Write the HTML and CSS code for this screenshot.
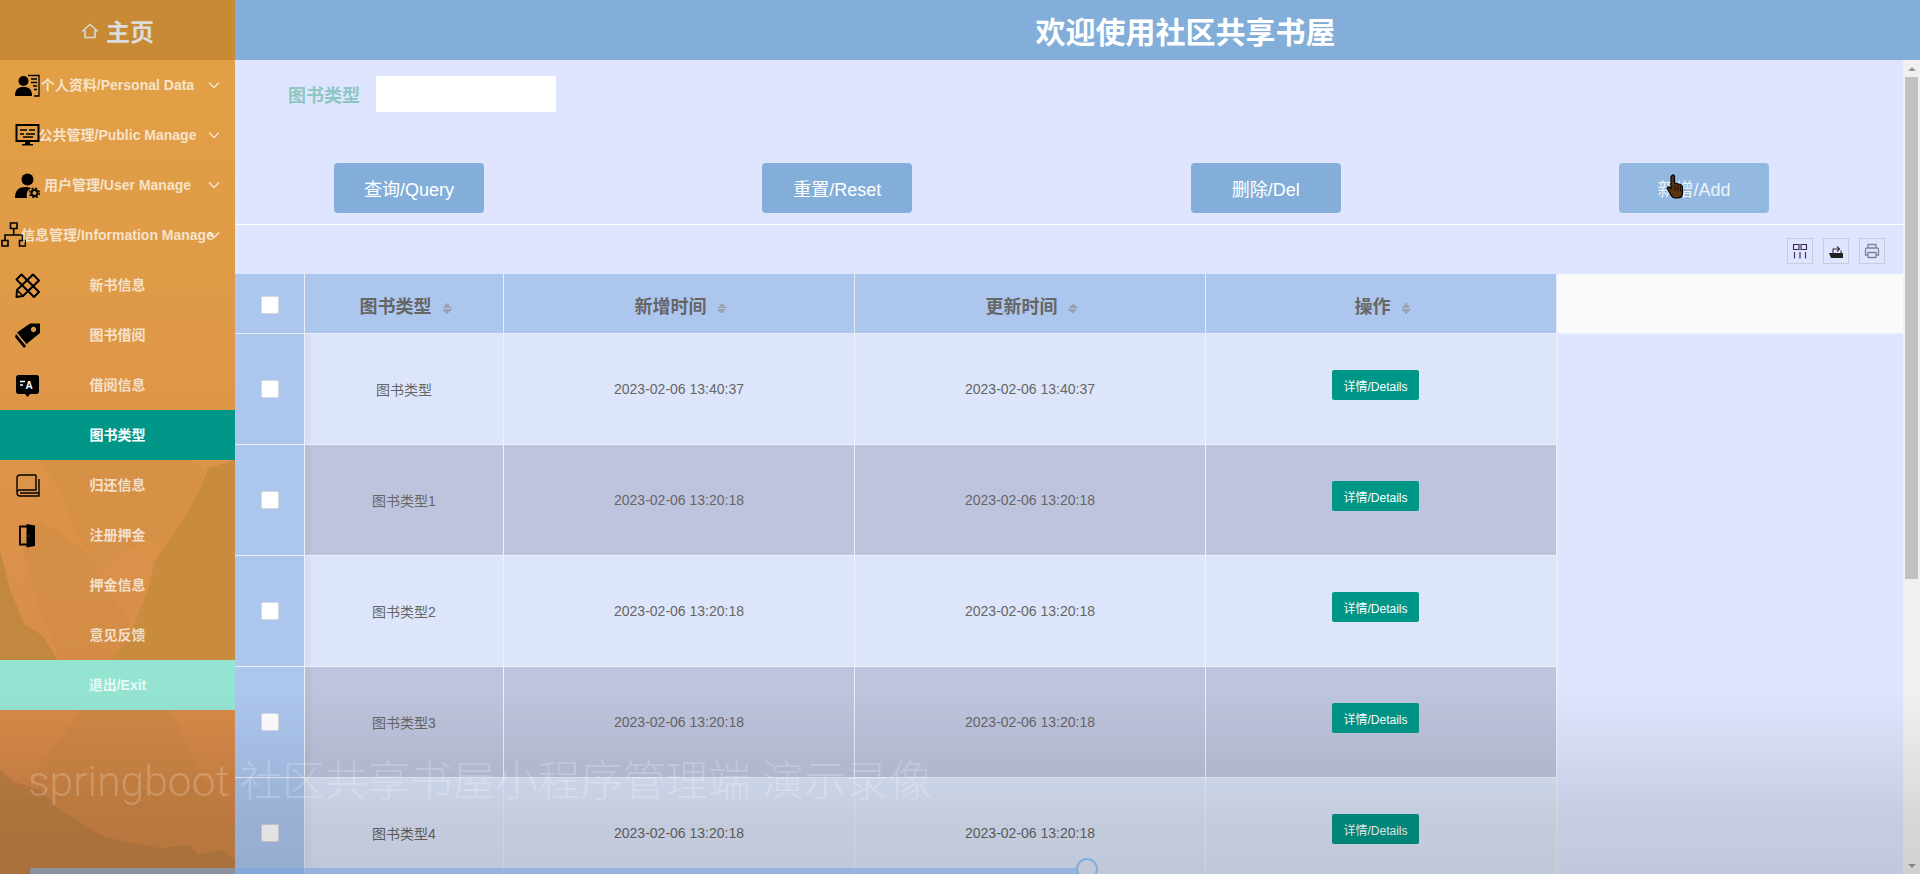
FILE: index.html
```html
<!DOCTYPE html>
<html lang="zh-CN">
<head>
<meta charset="utf-8">
<title>社区共享书屋</title>
<link rel="stylesheet" href="styles.css">
</head>
<body>
<div class="app">
  <aside class="side">
    <svg class="side-bg" viewBox="0 0 235 874" preserveAspectRatio="none" aria-hidden="true">
      <path fill="#d29046" opacity=".6" d="M40 460 60 490 75 530 95 560 100 575 125 550 150 540 170 555 190 530 205 470 190 460Z"/>
      <path fill="#c98c3e" d="M235 460 208 468 200 490 180 525 155 560 148 590 128 640 110 660 235 660Z"/>
      <path fill="#d08c42" opacity=".5" d="M95 560 100 582 130 620 120 660 60 660 40 610 20 540 40 520 70 540Z"/>
      <path fill="#c2883f" d="M0 550 10 590 25 625 42 635 58 660 0 660Z"/>
      <path fill="#d08746" d="M30 800 40 765 75 720 80 710 170 710 190 750 205 785 235 815 235 860 0 860 0 790Z"/>
      <path fill="#c08044" d="M0 770 15 782 40 790 60 810 85 825 100 835 125 842 160 848 190 845 198 855 220 850 235 860 235 874 0 874Z"/>
    </svg>
    <div class="brand">
      <svg class="brand-icon" viewBox="0 0 18 16" aria-hidden="true"><path d="M1 8.500 9 1.500 17 8.500M4 7v7.500h10V7" fill="none" stroke="#d8d8d8" stroke-width="1.600"/></svg>
      <span>主页</span>
    </div>
    <nav class="menu">
      <a class="item">
        <svg class="ico" viewBox="0 0 25 25" aria-hidden="true"><circle cx="8.500" cy="8" r="5"/><path d="M0 23c0-7 3-9 8.500-9s8.500 2 8.500 9z"/><path d="M13 2.500h11v20.500h-5M16 6h6M16 9.500h6M18 13h4M19 16.500h3" fill="none" stroke="#000" stroke-width="1.300"/></svg>
        个人资料/Personal Data
        <svg class="chev" viewBox="0 0 12 8" aria-hidden="true"><path d="M1 1.500 6 6.500 11 1.500"/></svg>
      </a>
      <a class="item">
        <svg class="ico" viewBox="0 0 25 25" aria-hidden="true"><rect x="1.500" y="2" width="22" height="16" fill="none" stroke="#000" stroke-width="2"/><path d="M5 7h7M14 7h6M5 11h4M11 11h9M8 14h10" stroke="#000" stroke-width="1.500"/><path d="M10 18h5v3h3v1.500H7V21h3z"/></svg>
        公共管理/Public Manage
        <svg class="chev" viewBox="0 0 12 8" aria-hidden="true"><path d="M1 1.500 6 6.500 11 1.500"/></svg>
      </a>
      <a class="item">
        <svg class="ico" viewBox="0 0 25 25" aria-hidden="true"><circle cx="12.500" cy="6.500" r="6"/><path d="M0 25c0-8 4-11 11-11 2 0 4 .5 5 1.500-3 1-5 4-4 9.500z"/><circle cx="19.500" cy="20" r="3" fill="none" stroke="#000" stroke-width="2"/><circle cx="19.500" cy="20" r="4.800" fill="none" stroke="#000" stroke-width="1.500" stroke-dasharray="2 1.800"/></svg>
        用户管理/User Manage
        <svg class="chev" viewBox="0 0 12 8" aria-hidden="true"><path d="M1 1.500 6 6.500 11 1.500"/></svg>
      </a>
      <a class="item">
        <svg class="ico ico-left" viewBox="0 0 25 25" aria-hidden="true"><path d="M9.500 1h6.500v5.500H9.500zM1 18.500h6V24H1zM18.500 18.500h6V24h-6zM12.700 6.500V13M4 18.500V13h17.500v5.500" fill="none" stroke="#000" stroke-width="1.600"/></svg>
        信息管理/Information Manage
        <svg class="chev" viewBox="0 0 12 8" aria-hidden="true"><path d="M1 1.500 6 6.500 11 1.500"/></svg>
      </a>
      <a class="item">
        <svg class="ico" viewBox="0 0 25 25" aria-hidden="true"><path d="M1.500 6.500 6.500 1.500 24 19 19 24Z" fill="none" stroke="#000" stroke-width="2" stroke-linejoin="round"/><path d="M18 1.500 24 7.500 8 23 1.500 24 2 17Z" fill="none" stroke="#000" stroke-width="2" stroke-linejoin="round"/><path d="M2.500 17.500 7.500 22.500M14.500 16.500 17 14" stroke="#000" stroke-width="1.500"/></svg>
        新书信息
      </a>
      <a class="item">
        <svg class="ico" viewBox="0 0 25 25" aria-hidden="true"><path fill-rule="evenodd" d="M15 .500h10V10L11.500 21 2 9.500zM18.500 3.800a2.700 2.700 0 1 0 .01 0z"/><path d="M1 11 11 23 9 25 0 14z"/></svg>
        图书借阅
      </a>
      <a class="item">
        <svg class="ico" viewBox="0 0 25 25" aria-hidden="true"><path d="M3 2h19a2.500 2.500 0 0 1 2 2v15a2.500 2.500 0 0 1-2 2h-7l-2.500 3-2.500-3H3a2.500 2.500 0 0 1-2-2V4a2.500 2.500 0 0 1 2-2z"/><path d="M5 8.500h5M5 12h3" stroke="#fff" stroke-width="1.500"/><text class="ico-letter" x="10.500" y="16">A</text></svg>
        借阅信息
      </a>
      <a class="item active">图书类型</a>
      <a class="item">
        <svg class="ico" viewBox="0 0 25 25" aria-hidden="true"><path d="M21 2H5a3 3 0 0 0-3 3v15a3 3 0 0 0 3 3h19V6M2 20a3 3 0 0 1 3-3h16V2M5 20h19" fill="none" stroke="#000" stroke-width="1.400"/></svg>
        归还信息
      </a>
      <a class="item">
        <svg class="ico" viewBox="0 0 25 25" aria-hidden="true"><path d="M5 3.500h10v18H5z" fill="none" stroke="#000" stroke-width="1.800"/><path fill-rule="evenodd" d="M11.500 1 20 2.500v20.500L11.500 24.500zM14.500 12a1 1 0 1 0 .01 0z"/></svg>
        注册押金
      </a>
      <a class="item">押金信息</a>
      <a class="item">意见反馈</a>
      <a class="item exit">退出/Exit</a>
    </nav>
  </aside>
  <div class="content">
    <header class="topbar"><h1>欢迎使用社区共享书屋</h1></header>
    <div class="pane">
      <main class="main">
        <form class="search">
          <label class="search-label" for="type">图书类型</label>
          <input class="search-input" id="type" type="text">
        </form>
        <div class="actions">
          <button class="btn" type="button">查询/Query</button>
          <button class="btn" type="button">重置/Reset</button>
          <button class="btn" type="button">删除/Del</button>
          <button class="btn btn-hover" type="button">新增/Add
            <svg class="hand" viewBox="0 0 18 25" aria-hidden="true"><path d="M6 1.500c1-1 2.500-.5 2.500 1V9l6 1.500c1.500.5 2 1.500 2 3V19c0 3-2 5-5 5H9c-2 0-3-1-4-3L1.500 15c-1-1.500.5-2.500 1.500-2l2 1.500V3z" fill="#5a3312" stroke="#000" stroke-width="1.200"/><path d="M9 11v6M12 11.500v6M14.500 12.500v5" stroke="#1e0f04" stroke-width="1"/></svg>
          </button>
        </div>
        <div class="tools">
          <button class="tool" type="button" aria-label="列"><svg viewBox="0 0 16 16"><path d="M1.500 1.500h5.500v5H1.500zM9 1.500h5.500v5H9zM2.500 9v6.500M8 9v6.500M13.500 9v6.500" fill="none" stroke="#3a2a55" stroke-width="1.100"/></svg></button>
          <button class="tool" type="button" aria-label="导出"><svg viewBox="0 0 16 16"><path d="M1 10h14v5H3z" fill="#222"/><path d="M5 10V6h6M9 3.500 11.500 6 9 8.500M13 7.500V10" fill="none" stroke="#333" stroke-width="1.100"/></svg></button>
          <button class="tool" type="button" aria-label="打印"><svg viewBox="0 0 16 16"><path d="M4 5V1.500h8V5M4 12H1.500V6.500A1.500 1.500 0 0 1 3 5h10a1.500 1.500 0 0 1 1.500 1.500V12H12M4 9.500h8v5H4z" fill="none" stroke="#7d8595" stroke-width="1.300"/></svg></button>
        </div>
        <table class="grid">
          <colgroup><col class="c-check"><col class="c-type"><col class="c-wide"><col class="c-wide"><col class="c-wide"><col></colgroup>
          <thead>
            <tr>
              <th class="check"><input class="box" type="checkbox" aria-label="全选"></th>
              <th>图书类型<i class="sort"></i></th>
              <th>新增时间<i class="sort"></i></th>
              <th>更新时间<i class="sort"></i></th>
              <th>操作<i class="sort"></i></th>
              <th class="filler"></th>
            </tr>
          </thead>
          <tbody>
            <tr><td class="check"><input class="box" type="checkbox" aria-label="选择"></td><td>图书类型</td><td>2023-02-06 13:40:37</td><td>2023-02-06 13:40:37</td><td class="op"><button class="detail" type="button">详情/Details</button></td><td class="filler"></td></tr>
            <tr><td class="check"><input class="box" type="checkbox" aria-label="选择"></td><td>图书类型1</td><td>2023-02-06 13:20:18</td><td>2023-02-06 13:20:18</td><td class="op"><button class="detail" type="button">详情/Details</button></td><td class="filler"></td></tr>
            <tr><td class="check"><input class="box" type="checkbox" aria-label="选择"></td><td>图书类型2</td><td>2023-02-06 13:20:18</td><td>2023-02-06 13:20:18</td><td class="op"><button class="detail" type="button">详情/Details</button></td><td class="filler"></td></tr>
            <tr><td class="check"><input class="box" type="checkbox" aria-label="选择"></td><td>图书类型3</td><td>2023-02-06 13:20:18</td><td>2023-02-06 13:20:18</td><td class="op"><button class="detail" type="button">详情/Details</button></td><td class="filler"></td></tr>
            <tr><td class="check"><input class="box" type="checkbox" aria-label="选择"></td><td>图书类型4</td><td>2023-02-06 13:20:18</td><td>2023-02-06 13:20:18</td><td class="op"><button class="detail" type="button">详情/Details</button></td><td class="filler"></td></tr>
          </tbody>
        </table>
      </main>
      <div class="scrollbar" aria-hidden="true">
        <div class="sb-arrow"></div>
        <div class="sb-track"><div class="sb-thumb"></div></div>
        <div class="sb-arrow sb-down"></div>
      </div>
    </div>
  </div>
</div>
<div class="player" aria-hidden="true">
  <div class="caption">springboot 社区共享书屋小程序管理端 演示录像</div>
  <div class="progress"></div>
  <div class="knob"></div>
</div>
</body>
</html>
```
FILE: styles.css
```css
* { box-sizing: border-box; }
html, body { margin: 0; height: 100%; overflow: hidden; }
body {
  font-family: "Liberation Sans", "Noto Sans CJK SC", sans-serif;
  font-size: 14px;
  color: #666;
  background: #dfe5fe;
}
.app { display: flex; height: 100vh; }

/* sidebar */
.side {
  position: relative;
  flex: 0 0 235px;
  background: linear-gradient(to bottom, #e3a144 0, #df9a47 300px, #da8f49 620px, #d38348 874px);
  overflow: hidden;
}
.side-bg { position: absolute; inset: 0; width: 100%; height: 100%; }
.brand {
  position: relative;
  height: 60px;
  display: flex;
  align-items: center;
  justify-content: center;
  gap: 7px;
  background: #c98a35;
  color: #dcdcdc;
  font-size: 24px;
  font-weight: 700;
}
.brand-icon { width: 18px; height: 16px; margin-top: 2px; }
.menu { position: relative; }
.item {
  position: relative;
  isolation: isolate;
  display: block;
  height: 50px;
  line-height: 50px;
  text-align: center;
  font-size: 14px;
  font-weight: 700;
  color: rgba(255, 255, 255, .72);
  white-space: nowrap;
}
.item.active { background: #009688; color: #fff; }
.item.exit { background: #95e4d2; color: rgba(255, 255, 255, .8); }
.ico { position: absolute; z-index: -1; left: 15px; top: 13px; width: 25px; height: 25px; }
.ico-left { left: 1px; top: 12px; }
.ico-letter { font: 700 10px "Liberation Sans", sans-serif; fill: #fff; }
.chev {
  position: absolute;
  left: 208px;
  top: 21px;
  width: 12px;
  height: 8px;
  fill: none;
  stroke: rgba(255, 255, 255, .75);
  stroke-width: 1.500;
}

/* right column */
.content { flex: 1; min-width: 0; display: flex; flex-direction: column; }
.topbar {
  flex: 0 0 60px;
  display: flex;
  align-items: center;
  justify-content: center;
  padding-left: 216px;
  background: #82aed9;
}
.topbar h1 { margin: 0; font-size: 30px; font-weight: 700; color: #fff; }
.pane { flex: 1; min-height: 0; display: flex; }
.main { flex: 1; min-width: 0; overflow: hidden; background: #dfe5fe; }

/* scrollbar */
.scrollbar { flex: 0 0 17px; display: flex; flex-direction: column; background: #f1f1f1; }
.sb-arrow {
  flex: 0 0 17px;
  display: flex;
  align-items: center;
  justify-content: center;
}
.sb-arrow::before {
  content: "";
  border-left: 4px solid transparent;
  border-right: 4px solid transparent;
  border-bottom: 4px solid #999;
}
.sb-down::before { border-bottom: 0; border-top: 4px solid #999; }
.sb-track { flex: 1; min-height: 0; padding: 0 2px; }
.sb-thumb { height: 502px; background: #c1c1c1; }

/* search */
.search { display: flex; align-items: center; gap: 16px; padding: 16px 0 0 53px; }
.search-label { font-size: 18px; font-weight: 700; color: #8ec6c4; }
.search-input { width: 180px; height: 36px; border: 0; background: #fff; padding: 0 10px; }
.actions {
  display: flex;
  justify-content: space-between;
  margin-top: 51px;
  padding: 0 134px 11px 99px;
  border-bottom: 1px solid #fff;
}
.btn {
  position: relative;
  width: 150px;
  height: 50px;
  border: 0;
  border-radius: 4px;
  background: #82aed9;
  color: #fff;
  font: inherit;
  font-size: 18px;
}
.btn-hover { background: #93b9e0; color: rgba(255, 255, 255, .85); }
.hand { position: absolute; left: 47px; top: 11px; width: 18px; height: 25px; }

/* toolbar */
.tools { height: 49px; display: flex; justify-content: flex-end; gap: 10px; padding: 13px 18px 0 0; }
.tool { width: 26px; height: 26px; padding: 4px; border: 1px solid #c8ccd8; background: transparent; }
.tool svg { display: block; width: 16px; height: 16px; }

/* table */
.grid { width: 100%; border-collapse: separate; border-spacing: 0; table-layout: fixed; }
.c-check { width: 70px; }
.c-type { width: 199px; }
.c-wide { width: 351px; }
.grid th {
  height: 60px;
  padding: 3px 0 0 3px;
  font-size: 18px;
  font-weight: 700;
  color: #666;
  background: #adc6ee;
  border-right: 1px solid #e6ecf9;
  border-bottom: 1px solid #e6ecf9;
  text-align: center;
}
.grid th.check { padding-left: 0; }
.grid td {
  height: 111px;
  padding: 0;
  text-align: center;
  color: #666;
  background: #dce5f9;
  border-right: 1px solid #eef1fb;
  border-bottom: 1px solid #eef1fb;
}
.grid tbody tr:nth-child(even) td { background: #bfc4de; }
.grid td:nth-child(2) { background-image: linear-gradient(to right, rgba(0, 0, 0, .04), transparent 10px); }
.grid tbody tr:nth-child(even) td:nth-child(2) { background-image: linear-gradient(to right, rgba(0, 0, 0, .04), transparent 10px); }
.grid td.op { padding-right: 11px; }
.grid td.check, .grid tbody tr:nth-child(even) td.check { background: #adc6ee; }
.grid th.filler { background: #fafafa; border-right: 0; border-bottom-color: #eef1fb; }
.grid td.filler, .grid tbody tr:nth-child(even) td.filler { background: transparent; border: 0; }
.box {
  appearance: none;
  display: block;
  width: 18px;
  height: 18px;
  margin: 0 auto;
  background: #fff;
  border: 1px solid #d5d9e3;
  border-radius: 2px;
}
.sort {
  display: inline-block;
  width: 10px;
  height: 11px;
  margin-left: 10px;
  vertical-align: -1px;
  background:
    linear-gradient(to bottom right, transparent 50%, #9aa3b5 50%) 0 0 / 5px 5px no-repeat,
    linear-gradient(to bottom left, transparent 50%, #9aa3b5 50%) 5px 0 / 5px 5px no-repeat,
    linear-gradient(to top right, transparent 50%, #9aa3b5 50%) 0 6px / 5px 5px no-repeat,
    linear-gradient(to top left, transparent 50%, #9aa3b5 50%) 5px 6px / 5px 5px no-repeat;
}
.detail {
  display: block;
  width: 87px;
  height: 30px;
  margin: 0 auto 8px;
  padding: 0;
  border: 0;
  border-radius: 2px;
  background: #009688;
  color: #fff;
  font: inherit;
  font-size: 12px;
}

/* video overlay */
.player {
  position: fixed;
  left: 0;
  right: 0;
  bottom: 0;
  height: 184px;
  overflow: hidden;
  pointer-events: none;
  background: linear-gradient(to bottom, rgba(0, 0, 0, 0) 0, rgba(0, 0, 0, .07) 48%, rgba(0, 0, 0, .1) 65%, rgba(0, 0, 0, .13) 100%);
}
.caption {
  position: absolute;
  left: 28px;
  top: 64px;
  font-family: "Roboto", "Noto Sans CJK SC", sans-serif;
  font-size: 42.600px;
  font-weight: 300;
  line-height: 54px;
  color: rgba(255, 255, 255, .2);
  white-space: nowrap;
}
.progress {
  position: absolute;
  left: 30px;
  bottom: 0;
  width: 1048px;
  height: 6px;
  background: rgba(120, 165, 225, .6);
}
.knob {
  position: absolute;
  left: 1076px;
  top: 168px;
  width: 22px;
  height: 22px;
  border: 2px solid #82aed9;
  border-radius: 50%;
}
```
